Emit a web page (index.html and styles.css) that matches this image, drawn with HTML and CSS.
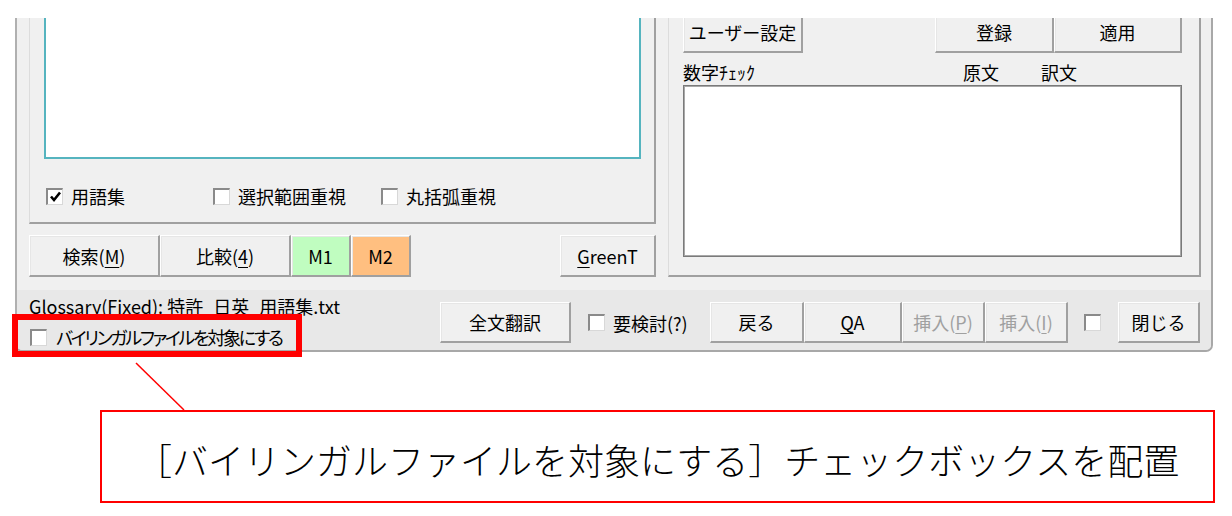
FILE: index.html
```html
<!DOCTYPE html>
<html>
<head>
    <meta charset="UTF-8">
    <title>バイリンガルファイルを対象にする</title>
    <link rel="stylesheet" href="styles.css">
</head>
<body>
<div class="page">
    <div class="window">
        <div class="main">
            <div class="left-col">
                <div class="group group-left">
                    <div class="memo"></div>
                    <div class="check-row">
                        <label class="check w-first"><span class="box checked"><svg viewBox="0 0 13 13" width="13" height="13"><polyline points="2,6.5 5,10 11,2.5" fill="none" stroke="#000" stroke-width="2.6"/></svg></span>用語集</label>
                        <label class="check w-second"><span class="box"></span>選択範囲重視</label>
                        <label class="check"><span class="box"></span>丸括弧重視</label>
                    </div>
                </div>
                <div class="btn-row">
                    <button class="btn w-search">検索(<u>M</u>)</button>
                    <button class="btn w-compare">比較(<u>4</u>)</button>
                    <button class="btn w-mem m1">M1</button>
                    <button class="btn w-mem m2">M2</button>
                    <button class="btn w-green"><u>G</u>reenT</button>
                </div>
            </div>

            <div class="group group-right">
                <div class="top-btns">
                    <button class="btn w-user">ユーザー設定</button>
                    <button class="btn w-reg">登録</button>
                    <button class="btn w-apply">適用</button>
                </div>
                <div class="num-head">
                    <span class="col-label">数字ﾁｪｯｸ</span>
                    <span class="col-src">原文</span>
                    <span>訳文</span>
                </div>
                <div class="listbox"></div>
            </div>
        </div>

        <div class="status">
            <div class="status-left">
                <div class="glossary">Glossary(Fixed): 特許_日英_用語集.txt</div>
                <label class="check bilingual"><span class="box"></span><span class="narrow">バイリンガルファイルを対象にする</span></label>
            </div>
            <div class="actions">
                <button class="btn w-full">全文翻訳</button>
                <label class="check w-review"><span class="box"></span>要検討(?)</label>
                <button class="btn w-back">戻る</button>
                <button class="btn w-qa"><u>Q</u>A</button>
                <button class="btn w-ins" disabled>挿入(<u>P</u>)</button>
                <button class="btn w-ins" disabled>挿入(<u>I</u>)</button>
                <span class="box lone"></span>
                <button class="btn w-close">閉じる</button>
            </div>
        </div>
    </div>

    <!-- annotation -->
    <div class="hl-box"></div>
    <svg class="leader" width="1232" height="516"><line x1="136" y1="363" x2="184" y2="410" stroke="#ff0000" stroke-width="1.5"/></svg>
    <div class="callout">［バイリンガルファイルを対象にする］チェックボックスを配置</div>
</div>
</body>
</html>
```

FILE: styles.css
```css
body {
    margin: 0;
    background: #fff;
    font-family: "Noto Sans CJK JP", sans-serif;
    font-size: 18px;
    color: #000;
}

.page {
    position: relative;
    width: 1232px;
    height: 516px;
    padding-top: 18px;
    box-sizing: border-box;
    overflow: hidden;
}

.window {
    margin-left: 15px;
    width: 1194px;
    height: 332px;
    background: #f0f0f0;
    border-left: 2px solid #b0b0b0;
    border-right: 2px solid #a8a8a8;
    border-bottom: 2px solid #a8a8a8;
    border-radius: 0 0 7px 7px;
    overflow: hidden;
}

.main {
    display: flex;
    align-items: flex-start;
    margin-top: -12px;
    padding-left: 12px;
}

.group {
    box-sizing: border-box;
    border-top: 1px solid #dcdcdc;
    border-left: 1px solid #dcdcdc;
    border-right: 2px solid #a0a0a0;
    border-bottom: 2px solid #a0a0a0;
}

.left-col {
    width: 627px;
}

.group-left {
    height: 218px;
    padding-left: 14px;
}

.memo {
    box-sizing: border-box;
    width: 597px;
    height: 152px;
    background: #fff;
    border: 2px solid #55b4bf;
}

.check-row {
    display: flex;
    align-items: center;
    height: 22px;
    margin-top: 26px;
    padding-left: 2px;
}

.check {
    display: flex;
    align-items: center;
    white-space: nowrap;
    line-height: 24px;
}

.w-first { width: 167px; }
.w-second { width: 168px; }

.box {
    box-sizing: border-box;
    display: inline-flex;
    align-items: center;
    justify-content: center;
    width: 17px;
    height: 17px;
    margin-right: 8px;
    background: #fff;
    border-top: 2px solid #8a8a8a;
    border-left: 2px solid #8a8a8a;
    border-right: 1px solid #d8d8d8;
    border-bottom: 1px solid #d8d8d8;
    flex-shrink: 0;
}

.btn-row {
    display: flex;
    margin-top: 11px;
}

.btn {
    box-sizing: border-box;
    height: 42px;
    padding: 0;
    font-family: inherit;
    font-size: 18px;
    color: #000;
    background: #f0f0f0;
    border-style: solid;
    border-width: 1px 2px 2px 1px;
    border-color: #fff #a0a0a0 #a0a0a0 #fff;
    box-shadow: inset 1px 1px 0 #e6e6e6;
    white-space: nowrap;
}

.btn u {
    text-underline-offset: 3px;
}

.btn:disabled {
    color: #a0a0a0;
}

.w-search { width: 131px; }
.w-compare { width: 131px; }
.w-mem { width: 60px; }
.m1 { background: #c0fdc0; }
.m2 { background: #ffbf80; }
.w-green { width: 96px; margin-left: auto; }

.group-right {
    width: 533px;
    height: 271px;
    margin-left: 12px;
    padding: 0 17px 0 14px;
}

.top-btns {
    display: flex;
    margin-top: 4px;
}

.w-user { width: 120px; }
.w-reg { width: 119px; margin-left: auto; }
.w-apply { width: 128px; }

.num-head {
    display: flex;
    line-height: 24px;
    margin-top: 7px;
    margin-bottom: 1px;
    white-space: nowrap;
}

.col-label { width: 280px; }
.col-src { width: 78px; }

.listbox {
    box-sizing: border-box;
    height: 172px;
    background: #fff;
    border: 1px solid #7a7a7a;
    box-shadow: inset 0 0 0 1px #a8a8a8;
}

.status {
    display: flex;
    align-items: flex-start;
    height: 60px;
    margin-top: 13px;
    padding-left: 12px;
    background: #e8e8e8;
}

.status-left {
    width: 411px;
    flex-shrink: 0;
}

.glossary {
    line-height: 24px;
    margin-top: 4px;
    white-space: nowrap;
}

.bilingual {
    margin-top: 7px;
    padding-left: 1px;
}

.bilingual .box {
    margin-right: 9px;
}

.narrow {
    font-feature-settings: "palt";
    letter-spacing: -2.3px;
}

.actions {
    display: flex;
    align-items: center;
    margin-top: 12px;
}

.btn.w-full { width: 131px; height: 41px; }
.w-review { width: 122px; margin-left: 17px; }
.btn.w-back { width: 94px; height: 41px; }
.btn.w-qa { width: 98px; height: 41px; }
.btn.w-ins { width: 83px; height: 41px; }
.lone { margin-left: 16px; margin-right: 17px; }
.btn.w-close { width: 82px; height: 41px; }

/* annotation overlay */
.hl-box {
    position: absolute;
    left: 12px;
    top: 314px;
    width: 290px;
    height: 43px;
    box-sizing: border-box;
    border: 6px solid #ff0000;
}

.leader {
    position: absolute;
    left: 0;
    top: 0;
}

.callout {
    position: absolute;
    left: 100px;
    top: 410px;
    width: 1115px;
    height: 93px;
    box-sizing: border-box;
    border: 2px solid #ff0000;
    display: flex;
    align-items: center;
    padding: 4px 0 0 34px;
    font-size: 36px;
    font-weight: 300;
    white-space: nowrap;
    background: #fff;
}
```
